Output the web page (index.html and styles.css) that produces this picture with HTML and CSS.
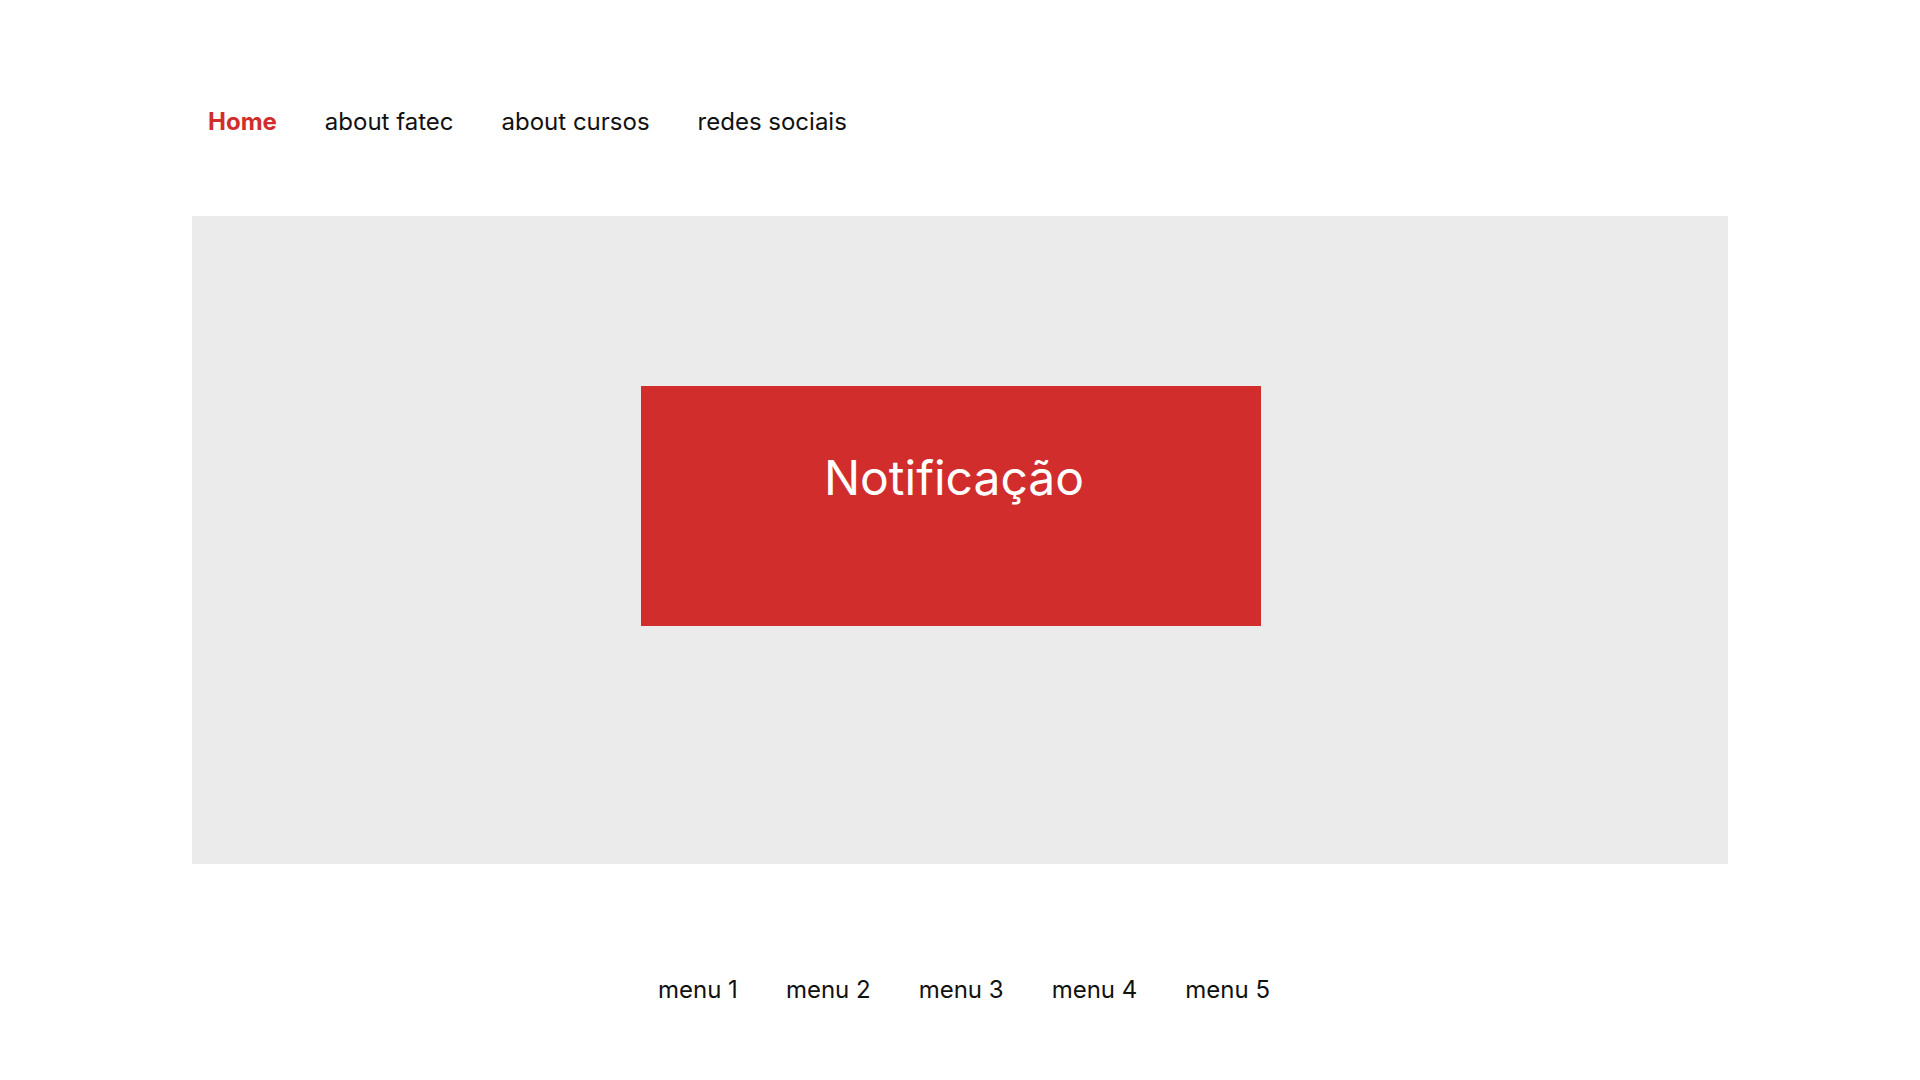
FILE: index.html
```html
<!DOCTYPE html>
<html lang="pt">
<head>
<meta charset="utf-8">
<title>Fatec</title>
<link rel="stylesheet" href="styles.css">
</head>
<body>
<div class="page">
  <header class="topnav">
    <a class="nav-link active" href="#">Home</a>
    <a class="nav-link" href="#">about fatec</a>
    <a class="nav-link" href="#">about cursos</a>
    <a class="nav-link" href="#">redes sociais</a>
  </header>
  <main class="hero">
    <div class="notice">Notificação</div>
  </main>
  <footer class="footnav">
    <a class="foot-link" href="#">menu 1</a>
    <a class="foot-link" href="#">menu 2</a>
    <a class="foot-link" href="#">menu 3</a>
    <a class="foot-link" href="#">menu 4</a>
    <a class="foot-link" href="#">menu 5</a>
  </footer>
</div>
</body>
</html>
```
FILE: styles.css
```css
html, body {
  margin: 0;
  padding: 0;
  background: #ffffff;
}
body {
  font-family: Inter, "Noto Sans", sans-serif;
  color: #111111;
}
.page {
  width: 1920px;
  height: 1080px;
  display: flex;
  flex-direction: column;
}
.topnav {
  display: flex;
  gap: 48px;
  padding: 107px 0 0 208px;
  height: 216px;
  box-sizing: border-box;
  flex-shrink: 0;
}
.nav-link {
  font-size: 24px;
  color: #111111;
  text-decoration: none;
  line-height: normal;
}
.nav-link.active {
  color: #d12d2d;
  font-weight: 700;
}
.hero {
  margin-left: 192px;
  width: 1536px;
  height: 648px;
  flex-shrink: 0;
  background: #ebebeb;
  box-sizing: border-box;
  padding: 170px 0 0 449px;
}
.notice {
  width: 620px;
  height: 240px;
  background: #d12d2d;
  color: #ffffff;
  font-size: 48px;
  text-align: center;
  box-sizing: border-box;
  padding-top: 62px;
  padding-left: 6px;
  line-height: normal;
}
.footnav {
  display: flex;
  justify-content: center;
  gap: 48px;
  padding: 111px 0 0 8px;
}
.foot-link {
  font-size: 24px;
  color: #111111;
  text-decoration: none;
  line-height: normal;
}
```
